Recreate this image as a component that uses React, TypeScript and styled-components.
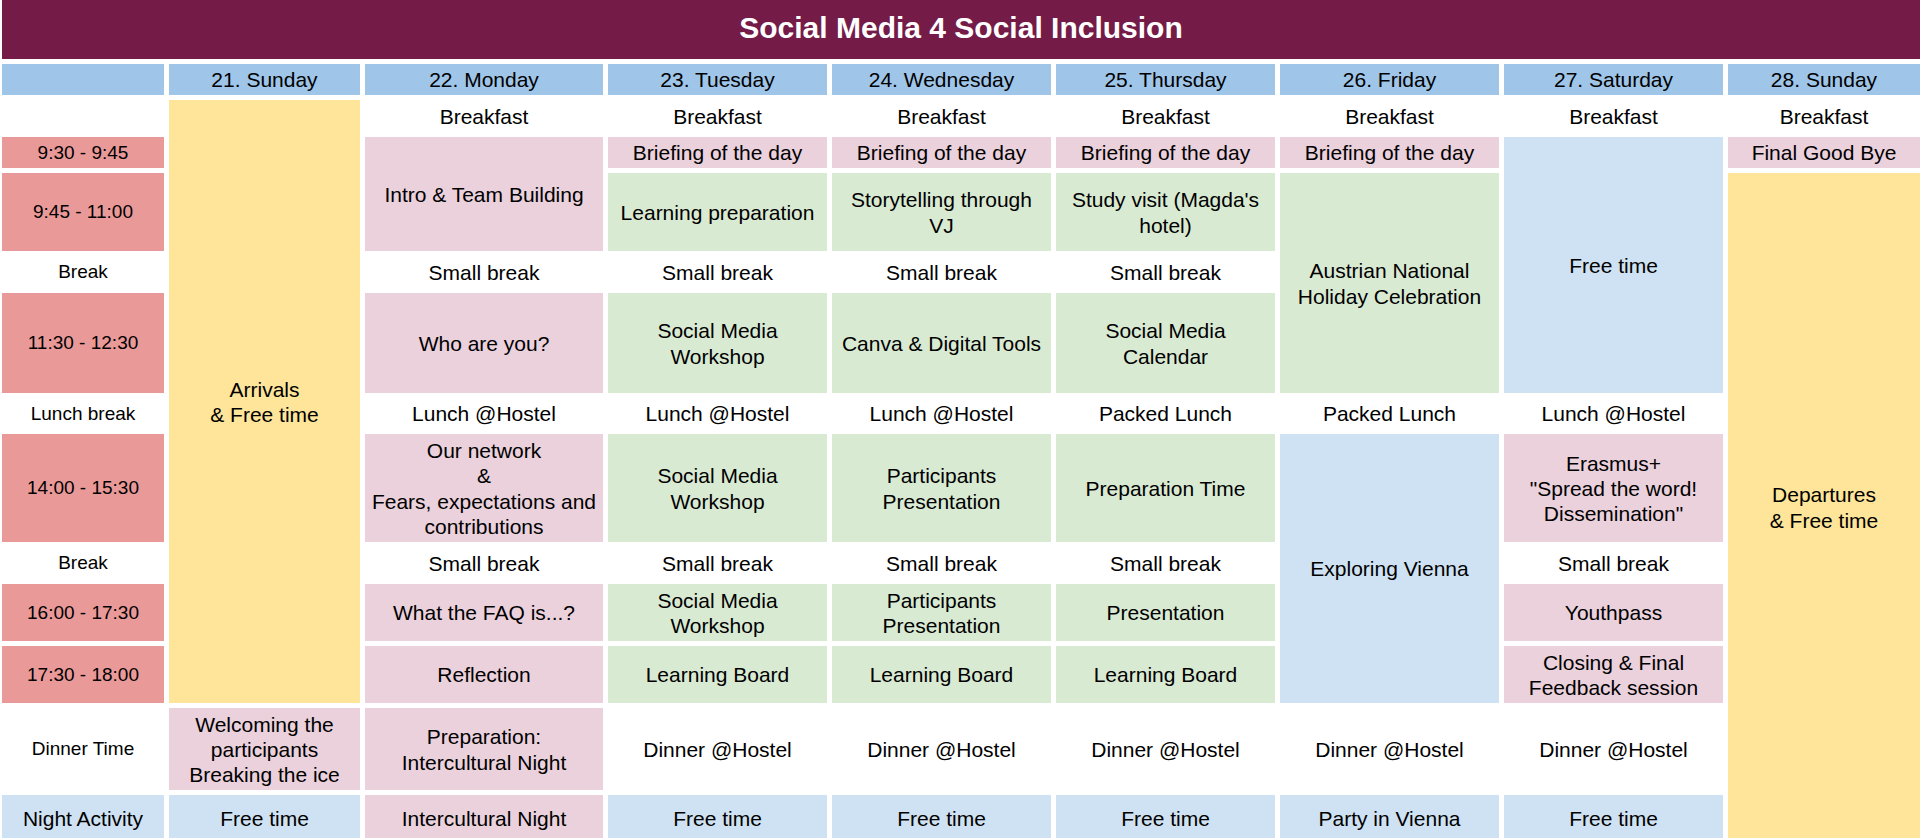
import React from "react";
import styled, { createGlobalStyle } from "styled-components";

const GlobalStyle = createGlobalStyle`
  html, body {
    margin: 0;
    padding: 0;
    background: #ffffff;
    overflow: hidden;
  }
  body {
    font-family: "Liberation Sans", Arial, sans-serif;
    color: #000000;
  }
`;

type Tone = "white" | "header" | "time" | "pink" | "green" | "blue" | "yellow";

const toneBg: Record<Tone, string> = {
  white: "transparent",
  header: "#9fc5e8",
  time: "#ea9999",
  pink: "#ead1dc",
  green: "#d9ead3",
  blue: "#cfe2f3",
  yellow: "#ffe599",
};

const Schedule = styled.main`
  display: grid;
  grid-template-columns: 162px 191px 238px repeat(5, 219px) 192px;
  grid-template-rows: 59px 31px 32px 31px 78px 32px 100px 31px 108px 32px 57px 57px 82px 46px;
  gap: 5px;
  padding-left: 2px;
  width: 1920px;
  box-sizing: border-box;
`;

const Title = styled.h1`
  grid-column: 1 / -1;
  grid-row: 1;
  margin: 0;
  padding-bottom: 3px;
  box-sizing: border-box;
  background: #741b47;
  color: #ffffff;
  font-size: 30px;
  font-weight: 700;
  display: flex;
  align-items: center;
  justify-content: center;
`;

const Cell = styled.div<{ $tone: Tone; $col: number; $row: number; $span: number }>`
  grid-column: ${(p) => p.$col};
  grid-row: ${(p) => `${p.$row} / span ${p.$span}`};
  background: ${(p) => toneBg[p.$tone]};
  display: flex;
  align-items: center;
  justify-content: center;
  text-align: center;
  white-space: pre-line;
  font-size: 21px;
  line-height: 1.2;
  padding: 1px 2px 0;
  box-sizing: border-box;
  overflow: hidden;
`;

const DayHeader = styled(Cell)`
  font-size: 21px;
`;

const TimeSlot = styled(Cell)<{ $big?: boolean }>`
  font-size: ${(p) => (p.$big ? 21 : 19)}px;
`;

type Entry = { text: string; tone: Tone; span?: number };

const timeColumn: (Entry & { big?: boolean })[] = [
  { text: "", tone: "white" },
  { text: "9:30 - 9:45", tone: "time" },
  { text: "9:45 - 11:00", tone: "time" },
  { text: "Break", tone: "white" },
  { text: "11:30 - 12:30", tone: "time" },
  { text: "Lunch break", tone: "white" },
  { text: "14:00 - 15:30", tone: "time" },
  { text: "Break", tone: "white" },
  { text: "16:00 - 17:30", tone: "time" },
  { text: "17:30 - 18:00", tone: "time" },
  { text: "Dinner Time", tone: "white" },
  { text: "Night Activity", tone: "blue", big: true },
];

const days: { title: string; entries: Entry[] }[] = [
  {
    title: "21. Sunday",
    entries: [
      { text: "Arrivals\n& Free time", tone: "yellow", span: 10 },
      { text: "Welcoming the\nparticipants\nBreaking the ice", tone: "pink" },
      { text: "Free time", tone: "blue" },
    ],
  },
  {
    title: "22. Monday",
    entries: [
      { text: "Breakfast", tone: "white" },
      { text: "Intro & Team Building", tone: "pink", span: 2 },
      { text: "Small break", tone: "white" },
      { text: "Who are you?", tone: "pink" },
      { text: "Lunch @Hostel", tone: "white" },
      { text: "Our network\n&\nFears, expectations and\ncontributions", tone: "pink" },
      { text: "Small break", tone: "white" },
      { text: "What the FAQ is...?", tone: "pink" },
      { text: "Reflection", tone: "pink" },
      { text: "Preparation:\nIntercultural Night", tone: "pink" },
      { text: "Intercultural Night", tone: "pink" },
    ],
  },
  {
    title: "23. Tuesday",
    entries: [
      { text: "Breakfast", tone: "white" },
      { text: "Briefing of the day", tone: "pink" },
      { text: "Learning preparation", tone: "green" },
      { text: "Small break", tone: "white" },
      { text: "Social Media\nWorkshop", tone: "green" },
      { text: "Lunch @Hostel", tone: "white" },
      { text: "Social Media\nWorkshop", tone: "green" },
      { text: "Small break", tone: "white" },
      { text: "Social Media\nWorkshop", tone: "green" },
      { text: "Learning Board", tone: "green" },
      { text: "Dinner @Hostel", tone: "white" },
      { text: "Free time", tone: "blue" },
    ],
  },
  {
    title: "24. Wednesday",
    entries: [
      { text: "Breakfast", tone: "white" },
      { text: "Briefing of the day", tone: "pink" },
      { text: "Storytelling through\nVJ", tone: "green" },
      { text: "Small break", tone: "white" },
      { text: "Canva & Digital Tools", tone: "green" },
      { text: "Lunch @Hostel", tone: "white" },
      { text: "Participants\nPresentation", tone: "green" },
      { text: "Small break", tone: "white" },
      { text: "Participants\nPresentation", tone: "green" },
      { text: "Learning Board", tone: "green" },
      { text: "Dinner @Hostel", tone: "white" },
      { text: "Free time", tone: "blue" },
    ],
  },
  {
    title: "25. Thursday",
    entries: [
      { text: "Breakfast", tone: "white" },
      { text: "Briefing of the day", tone: "pink" },
      { text: "Study visit (Magda's\nhotel)", tone: "green" },
      { text: "Small break", tone: "white" },
      { text: "Social Media\nCalendar", tone: "green" },
      { text: "Packed Lunch", tone: "white" },
      { text: "Preparation Time", tone: "green" },
      { text: "Small break", tone: "white" },
      { text: "Presentation", tone: "green" },
      { text: "Learning Board", tone: "green" },
      { text: "Dinner @Hostel", tone: "white" },
      { text: "Free time", tone: "blue" },
    ],
  },
  {
    title: "26. Friday",
    entries: [
      { text: "Breakfast", tone: "white" },
      { text: "Briefing of the day", tone: "pink" },
      { text: "Austrian National\nHoliday Celebration", tone: "green", span: 3 },
      { text: "Packed Lunch", tone: "white" },
      { text: "Exploring Vienna", tone: "blue", span: 4 },
      { text: "Dinner @Hostel", tone: "white" },
      { text: "Party in Vienna", tone: "blue" },
    ],
  },
  {
    title: "27. Saturday",
    entries: [
      { text: "Breakfast", tone: "white" },
      { text: "Free time", tone: "blue", span: 4 },
      { text: "Lunch @Hostel", tone: "white" },
      { text: 'Erasmus+\n"Spread the word!\nDissemination"', tone: "pink" },
      { text: "Small break", tone: "white" },
      { text: "Youthpass", tone: "pink" },
      { text: "Closing & Final\nFeedback session", tone: "pink" },
      { text: "Dinner @Hostel", tone: "white" },
      { text: "Free time", tone: "blue" },
    ],
  },
  {
    title: "28. Sunday",
    entries: [
      { text: "Breakfast", tone: "white" },
      { text: "Final Good Bye", tone: "pink" },
      { text: "Departures\n& Free time", tone: "yellow", span: 10 },
    ],
  },
];

function placeEntries<T extends Entry>(entries: T[]) {
  let row = 3;
  return entries.map((e) => {
    const span = e.span ?? 1;
    const placed = { ...e, row, span };
    row += span;
    return placed;
  });
}

export default function App() {
  return (
    <>
      <GlobalStyle />
      <Schedule>
        <Title>Social Media 4 Social Inclusion</Title>
        <DayHeader $tone="header" $col={1} $row={2} $span={1} />
        {placeEntries(timeColumn).map((e, i) => (
          <TimeSlot key={`t${i}`} $tone={e.tone} $col={1} $row={e.row} $span={e.span} $big={e.big}>
            {e.text}
          </TimeSlot>
        ))}
        {days.map((day, d) => (
          <React.Fragment key={day.title}>
            <DayHeader $tone="header" $col={d + 2} $row={2} $span={1}>
              {day.title}
            </DayHeader>
            {placeEntries(day.entries).map((e, i) => (
              <Cell key={`${d}-${i}`} $tone={e.tone} $col={d + 2} $row={e.row} $span={e.span}>
                {e.text}
              </Cell>
            ))}
          </React.Fragment>
        ))}
      </Schedule>
    </>
  );
}
